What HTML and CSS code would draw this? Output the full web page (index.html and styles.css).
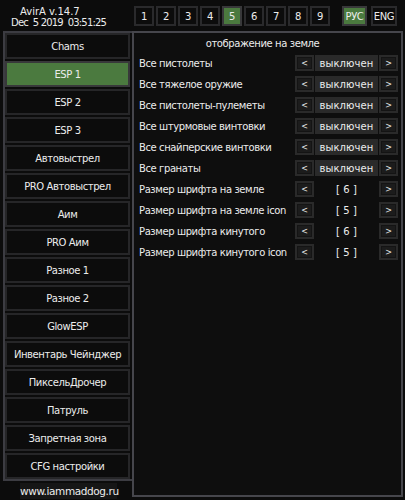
FILE: index.html
```html
<!DOCTYPE html>
<html lang="ru">
<head>
    <meta charset="UTF-8">
    <meta name="viewport" content="width=device-width, initial-scale=1.0">
    <title>AvirA</title>
    <link rel="stylesheet" href="styles.css">
</head>
<body>
    <div class="top">
        <div class="brand">
            <div class="name">AvirA v.14.7</div>
            <div class="build">Dec  5 2019  03:51:25</div>
        </div>
        <div class="tabs">
            <div class="tab">1</div>
            <div class="tab">2</div>
            <div class="tab">3</div>
            <div class="tab">4</div>
            <div class="tab active">5</div>
            <div class="tab">6</div>
            <div class="tab">7</div>
            <div class="tab">8</div>
            <div class="tab">9</div>
        </div>
        <div class="langs">
            <div class="tab lang active">РУС</div>
            <div class="tab lang eng">ENG</div>
        </div>
    </div>

    <div class="main">
        <div class="side">
            <div class="menu">
                <div class="menu-btn">Chams</div>
                <div class="menu-btn active">ESP 1</div>
                <div class="menu-btn">ESP 2</div>
                <div class="menu-btn">ESP 3</div>
                <div class="menu-btn">Автовыстрел</div>
                <div class="menu-btn">PRO Автовыстрел</div>
                <div class="menu-btn">Аим</div>
                <div class="menu-btn">PRO Аим</div>
                <div class="menu-btn">Разное 1</div>
                <div class="menu-btn">Разное 2</div>
                <div class="menu-btn">GlowESP</div>
                <div class="menu-btn">Инвентарь Чейнджер</div>
                <div class="menu-btn">ПиксельДрочер</div>
                <div class="menu-btn">Патруль</div>
                <div class="menu-btn">Запретная зона</div>
                <div class="menu-btn">CFG настройки</div>
            </div>
            <div class="site">www.iammaddog.ru</div>
        </div>

        <div class="panel">
            <div class="panel-title">отображение на земле</div>
            <div class="row">
                <span class="label">Все пистолеты</span>
                <div class="ctrl"><span class="arrow"><b>&lt;</b></span><span class="value">выключен</span><span class="arrow"><b>&gt;</b></span></div>
            </div>
            <div class="row">
                <span class="label">Все тяжелое оружие</span>
                <div class="ctrl"><span class="arrow"><b>&lt;</b></span><span class="value">выключен</span><span class="arrow"><b>&gt;</b></span></div>
            </div>
            <div class="row">
                <span class="label">Все пистолеты-пулеметы</span>
                <div class="ctrl"><span class="arrow"><b>&lt;</b></span><span class="value">выключен</span><span class="arrow"><b>&gt;</b></span></div>
            </div>
            <div class="row">
                <span class="label">Все штурмовые винтовки</span>
                <div class="ctrl"><span class="arrow"><b>&lt;</b></span><span class="value">выключен</span><span class="arrow"><b>&gt;</b></span></div>
            </div>
            <div class="row">
                <span class="label">Все снайперские винтовки</span>
                <div class="ctrl"><span class="arrow"><b>&lt;</b></span><span class="value">выключен</span><span class="arrow"><b>&gt;</b></span></div>
            </div>
            <div class="row">
                <span class="label">Все гранаты</span>
                <div class="ctrl"><span class="arrow"><b>&lt;</b></span><span class="value">выключен</span><span class="arrow"><b>&gt;</b></span></div>
            </div>
            <div class="row">
                <span class="label">Размер шрифта на земле</span>
                <div class="ctrl"><span class="arrow"><b>&lt;</b></span><span class="value plain">[ 6 ]</span><span class="arrow"><b>&gt;</b></span></div>
            </div>
            <div class="row">
                <span class="label">Размер шрифта на земле icon</span>
                <div class="ctrl"><span class="arrow"><b>&lt;</b></span><span class="value plain">[ 5 ]</span><span class="arrow"><b>&gt;</b></span></div>
            </div>
            <div class="row">
                <span class="label">Размер шрифта кинутого</span>
                <div class="ctrl"><span class="arrow"><b>&lt;</b></span><span class="value plain">[ 6 ]</span><span class="arrow"><b>&gt;</b></span></div>
            </div>
            <div class="row">
                <span class="label">Размер шрифта кинутого icon</span>
                <div class="ctrl"><span class="arrow"><b>&lt;</b></span><span class="value plain">[ 5 ]</span><span class="arrow"><b>&gt;</b></span></div>
            </div>
        </div>
    </div>
</body>
</html>
```

FILE: styles.css
```css
body {
    margin: 0;
    background: #0c0c0c;
    color: #ececec;
    font-family: "DejaVu Sans", Verdana, sans-serif;
    font-size: 10px;
    letter-spacing: -0.4px;
    width: 405px;
    height: 500px;
    overflow: hidden;
}
.top {
    display: flex;
    height: 31px;
}
.brand {
    width: 134px;
    padding-top: 6px;
    line-height: 11px;
}
.brand .name {
    padding-left: 20px;
    letter-spacing: 0;
}
.brand .build {
    padding-left: 11px;
    white-space: pre;
    letter-spacing: -0.8px;
}
.tabs {
    display: flex;
    gap: 2px;
    padding-top: 6px;
}
.tab {
    box-sizing: border-box;
    width: 20px;
    height: 20px;
    border: 2px solid #2a2a2c;
    background: #0c0c0c;
    display: flex;
    align-items: center;
    justify-content: center;
}
.tab.active {
    border-color: #38383a;
    background: #4b7a3f;
}
.langs {
    display: flex;
    gap: 4px;
    padding-top: 6px;
    margin-left: 12px;
}
.tab.lang {
    width: 25px;
}
.tab.eng {
    width: 26px;
}
.main {
    display: flex;
}
.side {
    width: 132px;
}
.menu {
    margin-left: 3px;
    border: 2px solid #3c3c42;
    border-right: none;
    padding-right: 2px;
}
.menu-btn {
    box-sizing: border-box;
    height: 26px;
    margin-bottom: 2px;
    border: 2px solid #262628;
    background: #0c0c0c;
    display: flex;
    align-items: center;
    justify-content: center;
}
.menu-btn:last-child {
    margin-bottom: 0;
}
.menu-btn.active {
    border-color: #38383a;
    background: #4b7a3f;
}
.site {
    width: 97px;
    margin: 2px 0 0 20px;
    height: 16px;
    line-height: 16px;
    background: #161616;
    text-align: center;
    font-size: 10.5px;
}
.panel {
    box-sizing: border-box;
    width: 271px;
    height: 466px;
    border: 2px solid #46464c;
    background: #0e0e0e;
    padding: 0 3px 0 5px;
}
.panel-title {
    text-align: center;
    height: 22px;
    line-height: 22px;
    padding-right: 12px;
}
.row {
    display: flex;
    align-items: center;
    justify-content: space-between;
    height: 16px;
    margin-bottom: 5px;
}
.label {
    white-space: nowrap;
}
.ctrl {
    display: flex;
    flex-shrink: 0;
    height: 16px;
    gap: 1px;
}
.arrow {
    box-sizing: border-box;
    width: 19px;
    background: #2a2a2a;
    padding: 2px;
    display: flex;
}
.arrow b {
    flex: 1;
    border: 1px solid #141414;
    background: #1c1c1c;
    font-weight: normal;
    font-size: 8px;
    letter-spacing: 0;
    display: flex;
    align-items: center;
    justify-content: center;
}
.value {
    width: 63px;
    background: #2a2a2a;
    letter-spacing: 0.1px;
    display: flex;
    align-items: center;
    justify-content: center;
}
.value.plain {
    background: transparent;
    white-space: pre;
}
```
